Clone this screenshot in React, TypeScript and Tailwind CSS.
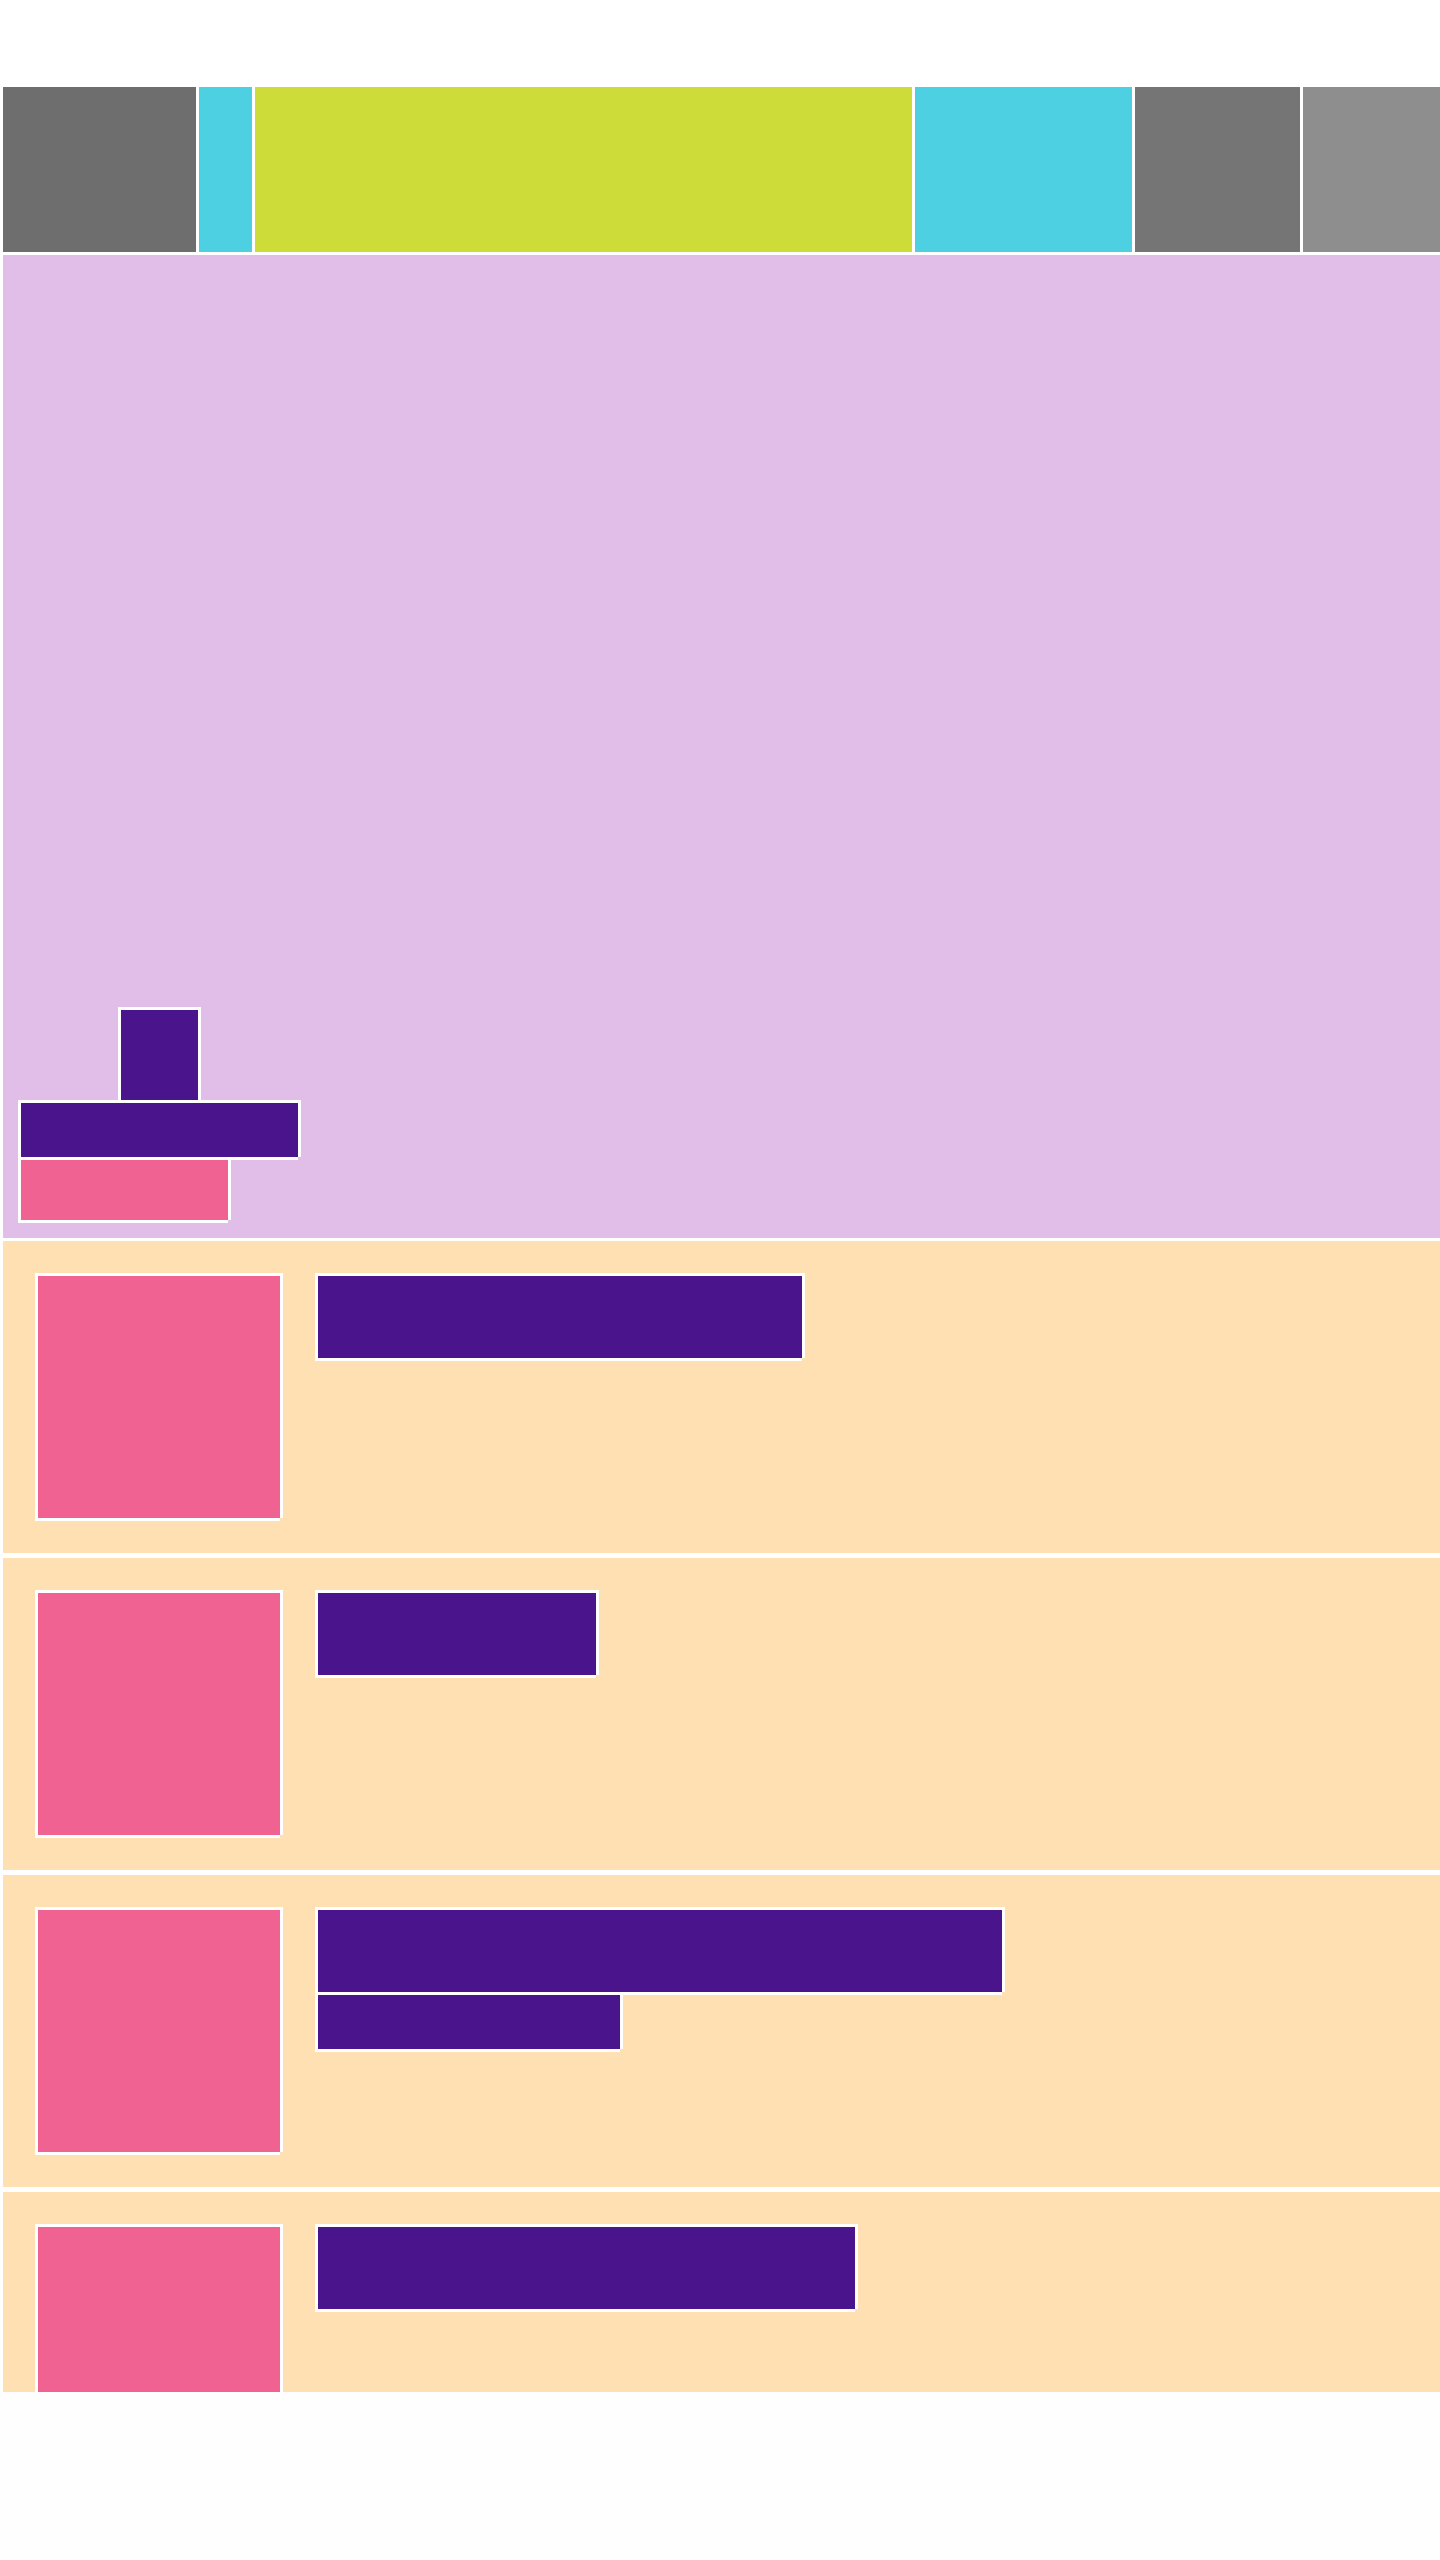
import React from "react";

const edge =
  "border-t-[3px] border-l-[3px] border-white shadow-[3px_0_0_0_#ffffff,0_3px_0_0_#ffffff]";

function Item({ titles }: { titles: { w: string; h: string }[] }) {
  return (
    <div className={`${edge} bg-[#ffe0b2] h-[315px] flex items-start pt-[32px] pl-[32px] shrink-0`}>
      <div className={`${edge} bg-[#f06292] w-[245px] h-[245px] shrink-0`} />
      <div className="ml-[35px] flex flex-col items-start">
        {titles.map((t, i) => (
          <div key={i} className={`${edge} bg-[#4a148c] ${t.w} ${t.h}`} />
        ))}
      </div>
    </div>
  );
}

export default function App() {
  return (
    <div className="w-[1440px] min-h-[2560px] bg-[#fefefe]">
      <div className="w-[1440px] h-[2392px] overflow-hidden bg-white pt-[84px]">
        <header className="flex h-[168px]">
          <div className={`${edge} bg-[#6e6e6e] w-[196px] shrink-0`} />
          <div className={`${edge} bg-[#4dd0e1] w-[56px] shrink-0`} />
          <div className={`${edge} bg-[#cddc39] w-[660px] shrink-0`} />
          <div className={`${edge} bg-[#4dd0e1] w-[220px] shrink-0`} />
          <div className={`${edge} bg-[#757575] w-[168px] shrink-0`} />
          <div className={`${edge} bg-[#8e8e8e] w-[140px] shrink-0`} />
        </header>
        <section
          className={`${edge} bg-[#e1bee7] h-[986px] flex flex-col justify-end items-start pl-[15px] pb-[18px]`}
        >
          <div className="flex flex-col items-center w-[280px]">
            <div className={`${edge} bg-[#4a148c] w-[80px] h-[93px]`} />
            <div className={`${edge} bg-[#4a148c] w-[280px] h-[57px]`} />
          </div>
          <div className={`${edge} bg-[#f06292] w-[210px] h-[63px]`} />
        </section>
        <div className="flex flex-col gap-[2px]">
          <Item titles={[{ w: "w-[487px]", h: "h-[85px]" }]} />
          <Item titles={[{ w: "w-[281px]", h: "h-[85px]" }]} />
          <Item
            titles={[
              { w: "w-[687px]", h: "h-[85px]" },
              { w: "w-[305px]", h: "h-[57px]" },
            ]}
          />
          <Item titles={[{ w: "w-[540px]", h: "h-[85px]" }]} />
        </div>
      </div>
    </div>
  );
}
